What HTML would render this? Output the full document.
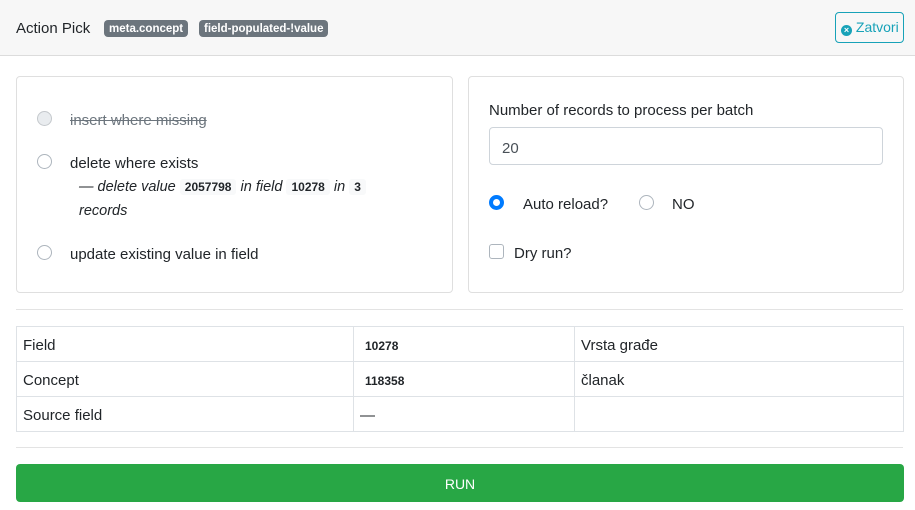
<!DOCTYPE html>
<html><head><meta charset="utf-8"><style>
*{box-sizing:border-box;margin:0;padding:0}
body{width:915px;height:510px;background:#fff;font-family:"Liberation Sans",sans-serif;color:#212529;position:relative;overflow:hidden;font-size:15px}
.a{position:absolute}
.hdr{left:0;top:0;width:915px;height:56px;background:#f7f7f7;border-bottom:1px solid #dcdcdc}
.badge{background:#6c757d;color:#fff;font-size:11.5px;font-weight:bold;border-radius:4px;height:17px;line-height:18px;padding:0 5px;top:20px}
.card{border:1px solid #dfdfdf;border-radius:4px;top:76px;height:217px}
.radio{width:15px;height:15px;border-radius:50%;border:1px solid #adb5bd;background:#fff}
code{font-family:"Liberation Sans",sans-serif;font-size:12px;font-weight:bold;background:#f8f9fa;padding:1px 5px;border-radius:3px;font-style:normal;color:#212529}
.hr{left:16px;width:887px;height:1px;background:#e3e3e3}
table{border-collapse:collapse;position:absolute;left:16px;top:326px;width:888px}
td{border:1px solid #dee2e6;height:35px;padding:2px 6px 0;font-size:15px}
</style></head><body>
<div class="a hdr"></div>
<div class="a" style="left:16px;top:20px;font-size:15px">Action Pick</div>
<div class="a badge" style="left:104px">meta.concept</div>
<div class="a badge" style="left:199px">field-populated-!value</div>
<div class="a" style="left:835px;top:12px;width:69px;height:31px;border:1px solid #17a2b8;border-radius:4px;color:#17a2b8;font-size:14px;line-height:29px;padding-left:5px;white-space:nowrap"><span style="display:inline-block;width:11px;height:11px;border-radius:50%;background:#17a2b8;color:#fff;font-size:9px;line-height:11px;text-align:center;font-weight:bold;vertical-align:-1px">×</span> Zatvori</div>

<div class="a card" style="left:16px;width:437px"></div>
<div class="a radio" style="left:37px;top:111px;background:#e9ecef;border-color:#c4c8cc"></div>
<div class="a" style="left:70px;top:112px;color:#6c757d;text-decoration:line-through">insert where missing</div>
<div class="a radio" style="left:37px;top:154px"></div>
<div class="a" style="left:70px;top:155px">delete where exists</div>
<div class="a" style="left:79px;top:175px;font-style:italic;font-size:14.5px;line-height:24px;width:320px">— delete value <code>2057798</code> in field <code>10278</code> in <code>3</code><br>records</div>
<div class="a radio" style="left:37px;top:245px"></div>
<div class="a" style="left:70px;top:246px">update existing value in field</div>

<div class="a card" style="left:468px;width:436px"></div>
<div class="a" style="left:489px;top:102px">Number of records to process per batch</div>
<div class="a" style="left:489px;top:127px;width:394px;height:38px;border:1px solid #ced4da;border-radius:4px;padding:12px 12px;font-size:15px;color:#495057">20</div>
<div class="a radio" style="left:489px;top:195px;border:4.5px solid #007bff;width:15px;height:15px"></div>
<div class="a" style="left:523px;top:196px">Auto reload?</div>
<div class="a radio" style="left:639px;top:195px"></div>
<div class="a" style="left:672px;top:196px">NO</div>
<div class="a" style="left:489px;top:244px;width:15px;height:15px;border:1px solid #adb5bd;border-radius:3px"></div>
<div class="a" style="left:514px;top:245px">Dry run?</div>

<div class="a hr" style="top:309px"></div>
<table>
<tr><td style="width:337px">Field</td><td style="width:221px"><code style="background:none">10278</code></td><td>Vrsta građe</td></tr>
<tr><td>Concept</td><td><code style="background:none">118358</code></td><td>članak</td></tr>
<tr><td>Source field</td><td>—</td><td></td></tr>
</table>
<div class="a hr" style="top:447px"></div>
<div class="a" style="left:16px;top:464px;width:888px;height:38px;background:#28a745;border-radius:4px;color:#fff;text-align:center;line-height:40px;font-size:14px">RUN</div>
</body></html>
